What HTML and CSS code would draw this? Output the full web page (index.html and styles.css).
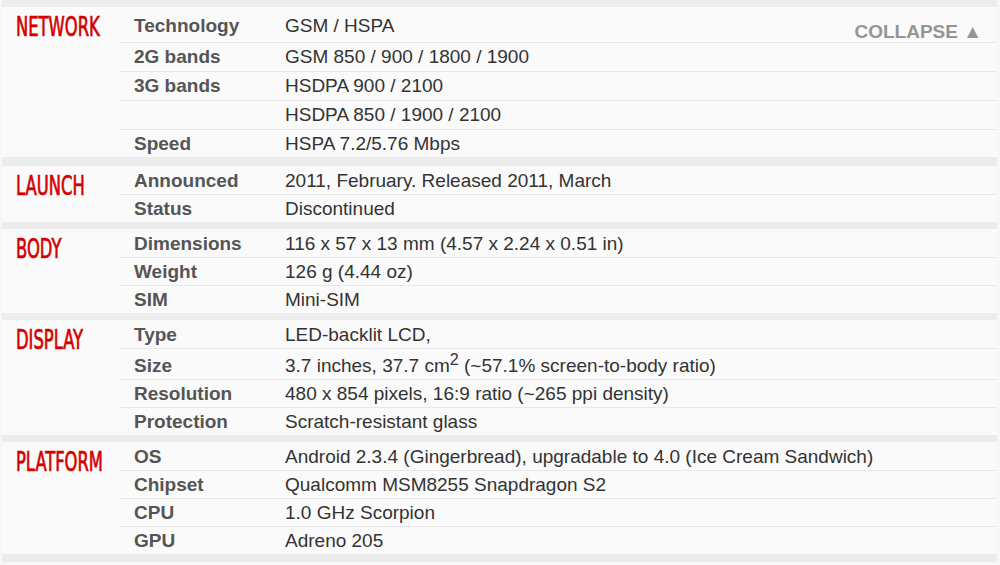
FILE: index.html
```html
<!DOCTYPE html>
<html>
<head>
<meta charset="utf-8">
<title>Specs</title>
<link rel="stylesheet" href="styles.css">
</head>
<body>
<div class="specs">
  <a class="collapse">COLLAPSE &#9650;</a>
  <section class="grp net">
    <div class="cat"><span>NETWORK</span></div>
    <div class="rows">
      <div class="row"><span class="k">Technology</span><span class="v">GSM / HSPA</span></div>
      <div class="row"><span class="k">2G bands</span><span class="v">GSM 850 / 900 / 1800 / 1900</span></div>
      <div class="row"><span class="k">3G bands</span><span class="v">HSDPA 900 / 2100</span></div>
      <div class="row"><span class="k"></span><span class="v">HSDPA 850 / 1900 / 2100</span></div>
      <div class="row"><span class="k">Speed</span><span class="v">HSPA 7.2/5.76 Mbps</span></div>
    </div>
  </section>
  <section class="grp">
    <div class="cat"><span>LAUNCH</span></div>
    <div class="rows">
      <div class="row"><span class="k">Announced</span><span class="v">2011, February. Released 2011, March</span></div>
      <div class="row"><span class="k">Status</span><span class="v">Discontinued</span></div>
    </div>
  </section>
  <section class="grp">
    <div class="cat"><span>BODY</span></div>
    <div class="rows">
      <div class="row"><span class="k">Dimensions</span><span class="v">116 x 57 x 13 mm (4.57 x 2.24 x 0.51 in)</span></div>
      <div class="row"><span class="k">Weight</span><span class="v">126 g (4.44 oz)</span></div>
      <div class="row"><span class="k">SIM</span><span class="v">Mini-SIM</span></div>
    </div>
  </section>
  <section class="grp">
    <div class="cat"><span>DISPLAY</span></div>
    <div class="rows">
      <div class="row"><span class="k">Type</span><span class="v">LED-backlit LCD,</span></div>
      <div class="row row-sup"><span class="k">Size</span><span class="v">3.7 inches, 37.7 cm<sup>2</sup> (~57.1% screen-to-body ratio)</span></div>
      <div class="row"><span class="k">Resolution</span><span class="v">480 x 854 pixels, 16:9 ratio (~265 ppi density)</span></div>
      <div class="row"><span class="k">Protection</span><span class="v">Scratch-resistant glass</span></div>
    </div>
  </section>
  <section class="grp">
    <div class="cat"><span>PLATFORM</span></div>
    <div class="rows">
      <div class="row"><span class="k">OS</span><span class="v">Android 2.3.4 (Gingerbread), upgradable to 4.0 (Ice Cream Sandwich)</span></div>
      <div class="row"><span class="k">Chipset</span><span class="v">Qualcomm MSM8255 Snapdragon S2</span></div>
      <div class="row"><span class="k">CPU</span><span class="v">1.0 GHz Scorpion</span></div>
      <div class="row"><span class="k">GPU</span><span class="v">Adreno 205</span></div>
    </div>
  </section>
</div>
</body>
</html>
```
FILE: styles.css
```css
html, body {
  margin: 0;
  padding: 0;
  background: #f7f7f7;
  font-family: "Liberation Sans", Arial, sans-serif;
}

.specs {
  position: relative;
  width: 995px;
  margin-left: 2px;
  padding: 7px 0 8px;
  background: #ececec;
  display: flex;
  flex-direction: column;
  gap: 7px;
}

.grp {
  display: flex;
  background: #fafafa;
}

.cat {
  flex: none;
  width: 104px;
  padding: 7px 0 0 14px;
}

.cat span {
  display: inline-block;
  font-family: "DejaVu Sans Condensed", "DejaVu Sans", sans-serif;
  font-size: 26px;
  line-height: 26px;
  color: #d40000;
  -webkit-text-stroke: 0.7px #d40000;
  transform: scaleX(0.7);
  transform-origin: left center;
  white-space: nowrap;
}

.rows {
  flex: 1;
}

.row {
  display: grid;
  grid-template-columns: 165px 1fr;
  font-size: 19px;
  line-height: 27px;
  border-top: 1px solid #e8e8e8;
}

.row:first-child {
  border-top: 0;
  padding-top: 1px;
}

.row-sup {
  padding-top: 3px;
}

.net {
  margin-bottom: 2px;
}

.net .row {
  line-height: 28px;
}

.net .row:last-child {
  line-height: 27px;
}

.net .row:first-child {
  padding-top: 5px;
  padding-bottom: 2px;
}

.k {
  padding-left: 14px;
  font-weight: bold;
  color: #555;
}

.v {
  color: #333;
}

.v sup {
  font-size: 0.85em;
  line-height: 0;
  vertical-align: 7px;
}

.collapse {
  position: absolute;
  top: 21px;
  right: 15px;
  font-size: 19px;
  line-height: 22px;
  font-weight: bold;
  color: #959595;
}
```
